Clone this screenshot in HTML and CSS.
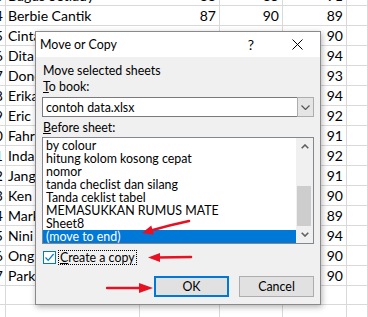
FILE: index.html
```html
<!DOCTYPE html>
<html lang="id">
<head>
  <meta charset="UTF-8">
  <title>Move or Copy</title>
  <link rel="stylesheet" href="styles.css">
</head>
<body>

  <!-- lembar kerja di belakang dialog -->
  <div class="sheet">
    <div class="row"><div class="c n">13</div><div class="c name">Bagus Setiady</div><div class="c v">88</div><div class="c v">85</div><div class="c v">91</div><div class="c"></div></div>
    <div class="row"><div class="c n">14</div><div class="c name">Berbie Cantik</div><div class="c v">87</div><div class="c v">90</div><div class="c v">89</div><div class="c"></div></div>
    <div class="row"><div class="c n">15</div><div class="c name">Cinta Laura</div><div class="c v">88</div><div class="c v">91</div><div class="c v">90</div><div class="c"></div></div>
    <div class="row"><div class="c n">16</div><div class="c name">Dita Amelia</div><div class="c v">92</div><div class="c v">95</div><div class="c v">94</div><div class="c"></div></div>
    <div class="row"><div class="c n">17</div><div class="c name">Dono Kasino</div><div class="c v">90</div><div class="c v">94</div><div class="c v">93</div><div class="c"></div></div>
    <div class="row"><div class="c n">18</div><div class="c name">Erika Putri</div><div class="c v">93</div><div class="c v">92</div><div class="c v">94</div><div class="c"></div></div>
    <div class="row"><div class="c n">19</div><div class="c name">Eric Martin</div><div class="c v">91</div><div class="c v">90</div><div class="c v">92</div><div class="c"></div></div>
    <div class="row"><div class="c n">20</div><div class="c name">Fahri Hamzah</div><div class="c v">89</div><div class="c v">92</div><div class="c v">91</div><div class="c"></div></div>
    <div class="row"><div class="c n">21</div><div class="c name">Indah Sari</div><div class="c v">90</div><div class="c v">93</div><div class="c v">92</div><div class="c"></div></div>
    <div class="row"><div class="c n">22</div><div class="c name">Jang Nara</div><div class="c v">88</div><div class="c v">92</div><div class="c v">91</div><div class="c"></div></div>
    <div class="row"><div class="c n">23</div><div class="c name">Ken Arok</div><div class="c v">87</div><div class="c v">91</div><div class="c v">90</div><div class="c"></div></div>
    <div class="row"><div class="c n">24</div><div class="c name">Markus</div><div class="c v">86</div><div class="c v">90</div><div class="c v">89</div><div class="c"></div></div>
    <div class="row"><div class="c n">25</div><div class="c name">Nini Ayu</div><div class="c v">93</div><div class="c v">94</div><div class="c v">94</div><div class="c"></div></div>
    <div class="row"><div class="c n">26</div><div class="c name">Ong Ling</div><div class="c v">89</div><div class="c v">91</div><div class="c v">90</div><div class="c"></div></div>
    <div class="row"><div class="c n">27</div><div class="c name">Park Jimin</div><div class="c v">88</div><div class="c v">92</div><div class="c v">90</div><div class="c"></div></div>
    <div class="row"><div class="c"></div><div class="c"></div><div class="c"></div><div class="c"></div><div class="c"></div><div class="c"></div></div>
    <div class="row"><div class="c"></div><div class="c"></div><div class="c"></div><div class="c"></div><div class="c"></div><div class="c"></div></div>
  </div>

  <!-- Dialog -->
  <div class="dialog">
    <div class="titlebar">
      <span class="title">Move or Copy</span>
      <span class="tbtn help">?</span>
      <span class="tbtn">
        <svg width="11" height="11" viewBox="0 0 11 11"><path d="M0.5 0.5 L10.5 10.5 M10.5 0.5 L0.5 10.5" stroke="#000" stroke-width="1" fill="none"/></svg>
      </span>
    </div>

    <div class="dbody">
      <div class="lbl">Move selected sheets</div>
      <div class="lbl"><u>T</u>o book:</div>
      <div class="combo">
        <span class="combo-text">contoh data.xlsx</span>
        <span class="dd">
          <svg width="9" height="5" viewBox="0 0 9 5"><path d="M0.5 0.5 L4.5 4.5 L8.5 0.5" stroke="#555" stroke-width="1.2" fill="none"/></svg>
        </span>
      </div>
      <div class="lbl lbl-sheet"><u>B</u>efore sheet:</div>
      <div class="listbox">
        <ul class="items">
          <li>by colour</li>
          <li>hitung kolom kosong cepat</li>
          <li>nomor</li>
          <li>tanda checlist dan silang</li>
          <li>Tanda ceklist tabel</li>
          <li>MEMASUKKAN RUMUS MATE</li>
          <li>Sheet8</li>
          <li class="selected">(move to end)</li>
        </ul>
        <div class="scroll">
          <span class="arr">
            <svg width="8" height="5" viewBox="0 0 8 5"><path d="M0.7 4.3 L4 1 L7.3 4.3" stroke="#606060" stroke-width="1.6" fill="none"/></svg>
          </span>
          <span class="track"><span class="thumb"></span></span>
          <span class="arr">
            <svg width="8" height="5" viewBox="0 0 8 5"><path d="M0.7 0.7 L4 4 L7.3 0.7" stroke="#606060" stroke-width="1.6" fill="none"/></svg>
          </span>
        </div>
      </div>
      <div class="check-row">
        <span class="checkbox">
          <svg width="11" height="11" viewBox="0 0 11 11"><path d="M1.5 5.5 L4.2 8.3 L9.6 2" stroke="#0078d7" stroke-width="1.2" fill="none"/></svg>
        </span>
        <span class="focus"><u>C</u>reate a copy</span>
      </div>
      <div class="buttons">
        <button class="btn btn-default">OK</button>
        <button class="btn">Cancel</button>
      </div>
    </div>
  </div>

  <!-- coretan panah merah -->
  <svg class="marks" width="368" height="317" viewBox="0 0 368 317">
    <path d="M189 221 Q170 225 151 230.5" stroke="#e81123" stroke-width="2.6" fill="none" stroke-linecap="round"/>
    <polygon points="142,233 153.8,234.8 151.3,225.6" fill="#e81123"/>
    <path d="M191 257 L157 257.5" stroke="#e81123" stroke-width="2.6" fill="none" stroke-linecap="round"/>
    <polygon points="148,257.5 160,253 160,262" fill="#e81123"/>
    <path d="M107 288 L141 288" stroke="#e81123" stroke-width="2.4" fill="none" stroke-linecap="round"/>
    <polygon points="153,288 139,283 139,293" fill="#e81123"/>
  </svg>

</body>
</html>
```

FILE: styles.css
```css
* {
  box-sizing: border-box;
}
body {
  margin: 0;
  width: 368px;
  height: 317px;
  overflow: hidden;
  position: relative;
  background: #fff;
}

/* lembar kerja */
.sheet {
  margin-top: -15px;
  font-family: Lato, sans-serif;
  font-size: 14px;
  color: #000;
}
.row {
  display: grid;
  grid-template-columns: 6px 134px 80px 63px 64px 21px;
  height: 20px;
}
.c {
  min-width: 0;
  border-right: 1px solid #d9d9d9;
  border-bottom: 1px solid #d9d9d9;
  padding-top: 1px;
  line-height: 19px;
  white-space: nowrap;
  overflow: hidden;
}
.n {
  display: flex;
  justify-content: flex-end;
  padding-right: 2px;
}
.name {
  padding-left: 2px;
  border-right: none;
  overflow: visible;
}
.v {
  text-align: right;
  padding-right: 3px;
}

/* dialog */
.dialog {
  position: absolute;
  left: 35px;
  top: 31px;
  width: 286px;
  height: 274px;
  border: 1px solid #8a8a8a;
  background: #f0f0f0;
  box-shadow: 1px 2px 6px rgba(0,0,0,0.3);
  font-family: Lato, sans-serif;
  font-size: 12.4px;
  color: #000;
}
.titlebar {
  height: 25px;
  background: #fff;
  display: flex;
  align-items: center;
  padding-left: 4px;
}
.title {
  flex: 1;
}
.tbtn {
  width: 46px;
  height: 25px;
  display: flex;
  align-items: center;
  justify-content: center;
}
.help {
  font-size: 14px;
}
.dbody {
  padding: 6px 6px 0 6px;
}
.lbl {
  height: 16px;
  line-height: 16px;
  padding-left: 1px;
}
.lbl-sheet {
  margin-top: 3px;
}
.combo {
  margin-top: 2px;
  height: 20px;
  background: #fff;
  border: 1px solid #7a7a7a;
  display: flex;
  align-items: center;
}
.combo-text {
  flex: 1;
  padding-left: 3px;
}
.dd {
  width: 17px;
  height: 20px;
  margin: -1px -1px -1px 0;
  background: #e5e5e5;
  border: 1px solid #adadad;
  display: flex;
  align-items: center;
  justify-content: center;
}
.listbox {
  margin-top: 1px;
  height: 107px;
  background: #fff;
  border: 1px solid #828790;
  display: flex;
}
.items {
  flex: 1;
  list-style: none;
  margin: 0;
  padding: 1px 0 0 0;
  overflow: hidden;
}
.items li {
  height: 13px;
  line-height: 13px;
  padding-left: 3px;
  white-space: nowrap;
}
.items li.selected {
  background: #0078d7;
  color: #fff;
}
.scroll {
  width: 17px;
  background: #f0f0f0;
  display: flex;
  flex-direction: column;
}
.arr {
  height: 17px;
  display: flex;
  align-items: center;
  justify-content: center;
}
.track {
  flex: 1;
  display: flex;
  flex-direction: column;
  justify-content: flex-end;
}
.thumb {
  height: 40px;
  margin: 0 2px 0 1px;
  background: #cdcdcd;
}
.check-row {
  margin-top: 5px;
  height: 17px;
  display: flex;
  align-items: center;
}
.checkbox {
  width: 13px;
  height: 13px;
  margin-left: 1px;
  margin-right: 2px;
  background: #fff;
  border: 1px solid #0078d7;
  display: flex;
  align-items: center;
  justify-content: center;
}
.focus {
  border: 1px dotted #000;
  line-height: 13px;
  padding: 0 1px;
}
.buttons {
  margin-top: 10px;
  display: flex;
  justify-content: flex-end;
  gap: 10px;
}
.btn {
  width: 75px;
  height: 21px;
  background: #e1e1e1;
  border: 1px solid #adadad;
  font-family: Lato, sans-serif;
  font-size: 12.4px;
  color: #000;
  padding: 0;
}
.btn-default {
  border: 2px solid #0078d7;
}

/* panah merah */
.marks {
  position: absolute;
  left: 0;
  top: 0;
  pointer-events: none;
}
```
